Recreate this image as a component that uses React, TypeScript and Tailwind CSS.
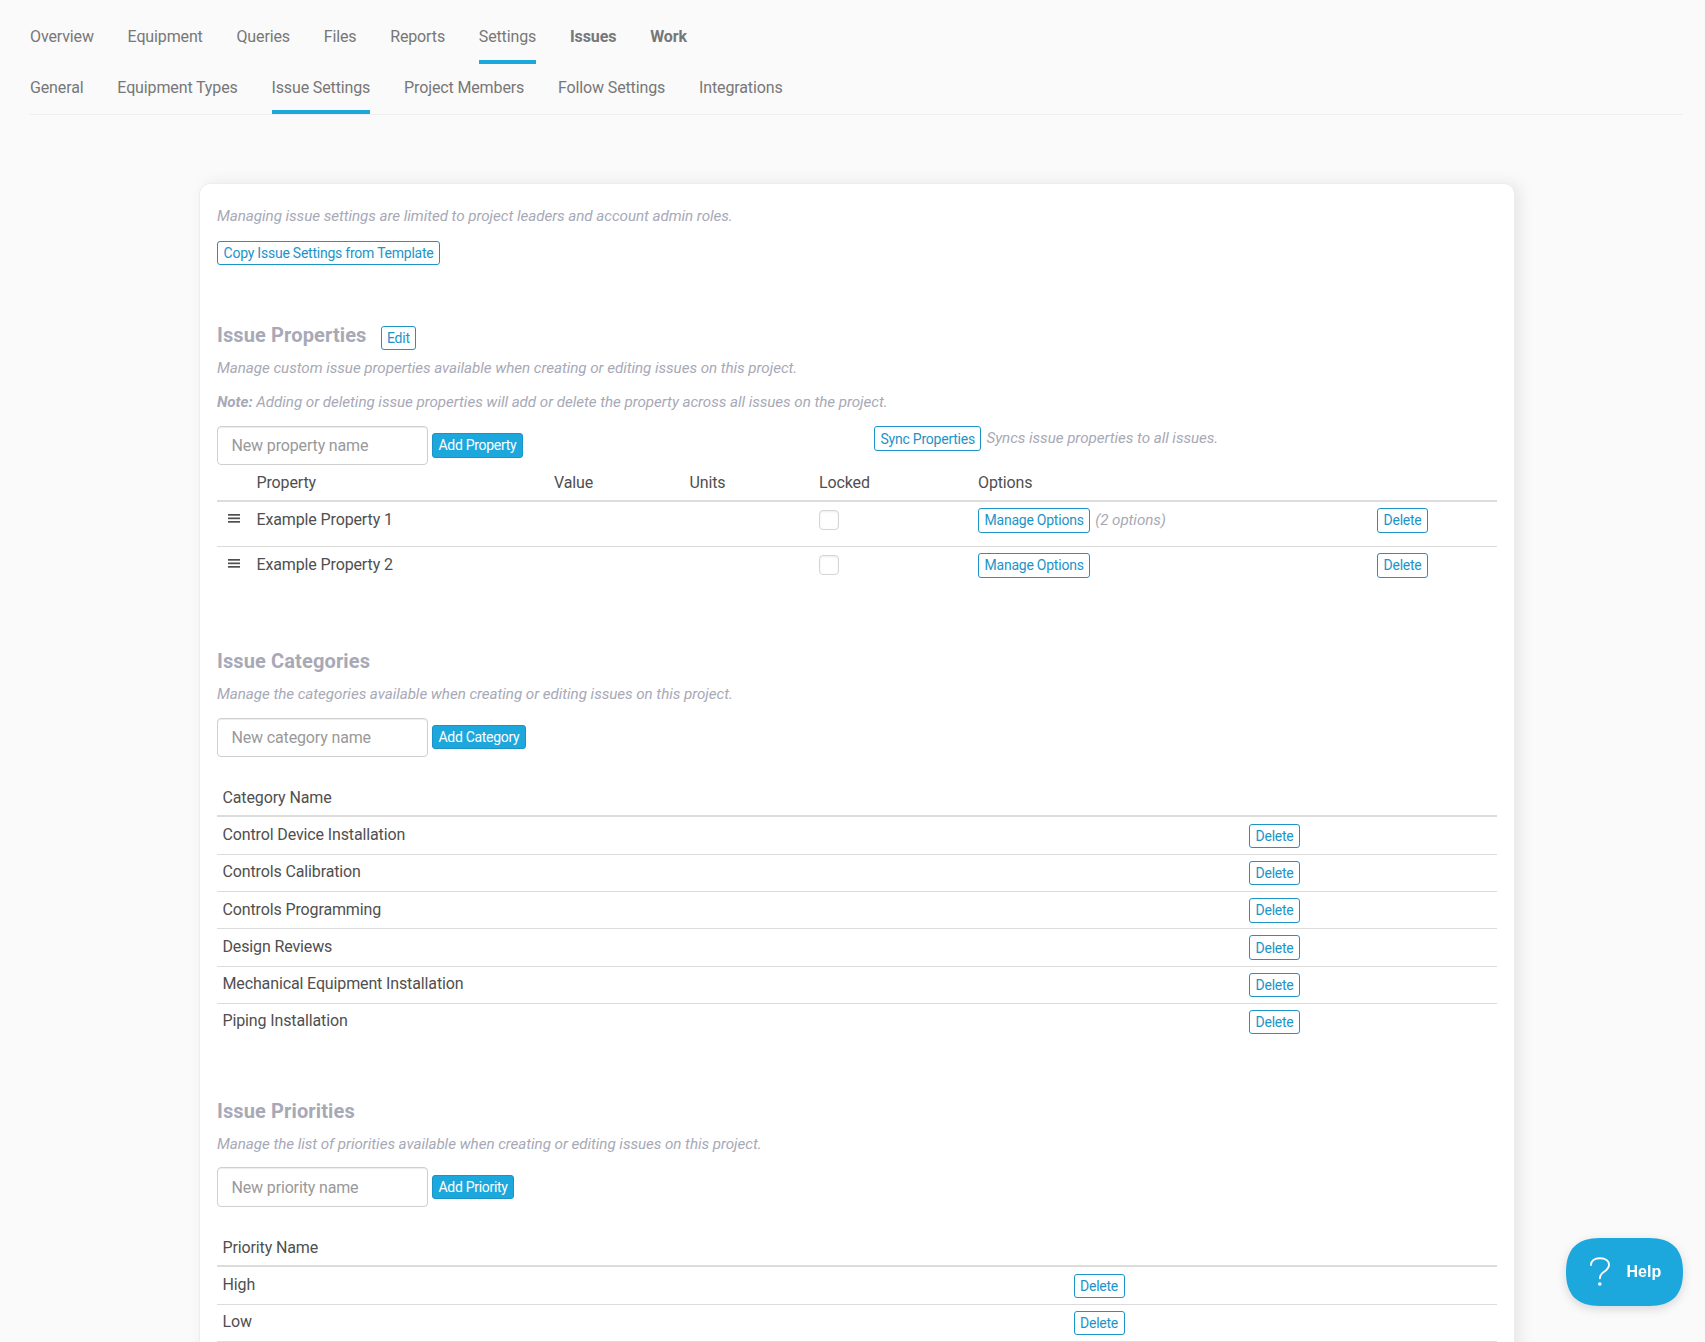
import type { ReactNode } from "react";

const mainTabs = [
  { label: "Overview" },
  { label: "Equipment" },
  { label: "Queries" },
  { label: "Files" },
  { label: "Reports" },
  { label: "Settings", active: true },
  { label: "Issues", bold: true },
  { label: "Work", bold: true },
];

const subTabs = [
  { label: "General" },
  { label: "Equipment Types" },
  { label: "Issue Settings", active: true },
  { label: "Project Members" },
  { label: "Follow Settings" },
  { label: "Integrations" },
];

const properties = [
  { name: "Example Property 1", options: "(2 options)" },
  { name: "Example Property 2", options: "" },
];

const categories = [
  "Control Device Installation",
  "Controls Calibration",
  "Controls Programming",
  "Design Reviews",
  "Mechanical Equipment Installation",
  "Piping Installation",
];

const priorities = ["High", "Low"];

const propertyCols = "grid grid-cols-[39.5px_297.5px_135.5px_129.5px_159px_399px_1fr]";

function OutlineButton({ children }: { children: ReactNode }) {
  return (
    <button className="h-[24.4px] shrink-0 rounded-[3px] border border-[#1c94c8] bg-white px-[5.5px] text-sm leading-[22px] tracking-[-0.23px] whitespace-nowrap text-[#1c94c8]">
      {children}
    </button>
  );
}

function Hint({ children }: { children: ReactNode }) {
  return <p className="text-[15.2px] leading-6 tracking-[-0.055px] text-[#a7a9b7] italic">{children}</p>;
}

function Heading({ children }: { children: ReactNode }) {
  return <h2 className="text-xl leading-7 font-bold tracking-[0.12px] text-[#a7a9b7]">{children}</h2>;
}

function AddForm({ placeholder, action }: { placeholder: string; action: string }) {
  return (
    <div className="flex h-[39.4px] items-center gap-1">
      <input
        placeholder={placeholder}
        className="h-[39.4px] w-[211px] rounded border border-[#cfcfcf] bg-white px-[13.5px] text-base tracking-[-0.15px] shadow-[inset_0_1px_1px_rgba(0,0,0,0.075)] placeholder:text-[#999]"
      />
      <button className="mb-[0.4px] h-[24.4px] rounded-[3px] border border-[#1a94c7] bg-[#1ca8dd] px-[5.5px] text-sm leading-[22px] tracking-[-0.3px] whitespace-nowrap text-white">
        {action}
      </button>
    </div>
  );
}

function NameTable({ title, rows, cols }: { title: string; rows: string[]; cols: string }) {
  return (
    <div className="mt-[21.75px]">
      <div className="h-[38px] border-b-2 border-[#dcdcdc] px-[5.5px] pt-[7px]">{title}</div>
      {rows.map((row, i) => (
        <div key={row} className={`grid h-[37.25px] ${cols} ${i > 0 ? "border-t border-[#dcdcdc]" : "pt-px"}`}>
          <span className="px-[5.5px] pt-[5.4px]">{row}</span>
          <div className="pt-1.5">
            <OutlineButton>Delete</OutlineButton>
          </div>
        </div>
      ))}
    </div>
  );
}

function Grip() {
  return (
    <svg width="12" height="9" viewBox="0 0 12 9" className="mt-[12.5px] ml-[11px]" fill="#4f4f4f">
      <rect width="12" height="1.7" y="0" />
      <rect width="12" height="1.7" y="3.5" />
      <rect width="12" height="1.7" y="7" />
    </svg>
  );
}

function HelpButton() {
  return (
    <button className="fixed right-[22px] bottom-9 flex h-[68px] w-[117px] items-center pl-6 font-['Liberation_Sans',Arial,sans-serif] text-white">
      <svg
        width="117"
        height="68"
        viewBox="0 0 117 68"
        className="absolute inset-0 overflow-visible drop-shadow-[0_3px_5px_rgba(0,0,0,0.14)]"
      >
        <path d="M0 34C0 11 11 0 34 0H83C106 0 117 11 117 34S106 68 83 68H34C11 68 0 57 0 34Z" fill="#1ca8dd" />
      </svg>
      <svg
        width="20"
        height="30"
        viewBox="0 0 20 30"
        className="relative"
        fill="none"
        stroke="white"
        strokeWidth="1.9"
        strokeLinecap="round"
      >
        <path d="M1 8C1 3.500 4.500 1.300 10 1.300S19 4 19 7.800C19 11.500 16.500 13 14 14.800C11.500 16.600 9.900 18 9.900 21.300" />
        <circle cx="9.800" cy="27" r="1.800" fill="white" stroke="none" />
      </svg>
      <span className="relative -mt-px ml-[16.5px] text-base leading-5 font-bold tracking-normal">Help</span>
    </button>
  );
}

export default function App() {
  return (
    <div className="h-[1342px] overflow-hidden bg-[#fafafa] pr-[22px] pl-[30px] font-['Roboto',sans-serif] text-base leading-6 tracking-[-0.13px] text-[#4f4f4f]">
      <nav className="flex h-16 gap-[33.75px] pt-[25px] text-[#777]">
        {mainTabs.map((tab) => (
          <a
            key={tab.label}
            className={`border-b-4 ${tab.active ? "border-[#1ca8dd]" : "border-transparent"} ${tab.bold ? "font-bold tracking-[-0.08px]" : ""}`}
          >
            {tab.label}
          </a>
        ))}
      </nav>
      <nav className="flex h-[51px] gap-[33.85px] border-b border-[#eee] pt-3 text-[#777]">
        {subTabs.map((tab) => (
          <a key={tab.label} className={`border-b-4 ${tab.active ? "border-[#1ca8dd]" : "border-transparent"}`}>
            {tab.label}
          </a>
        ))}
      </nav>

      <main className="mt-[68px] ml-[169px] h-[1300px] w-[1316px] rounded-[11px] border border-[#ededed] bg-white px-[17px] pt-5 shadow-[5px_0_15px_rgba(0,0,0,0.08)]">
        <Hint>Managing issue settings are limited to project leaders and account admin roles.</Hint>
        <div className="mt-[13px] flex h-6">
          <OutlineButton>Copy Issue Settings from Template</OutlineButton>
        </div>

        <section className="mt-14">
          <div className="flex h-7 gap-3.5">
            <Heading>Issue Properties</Heading>
            <div className="pt-[5px]">
              <OutlineButton>Edit</OutlineButton>
            </div>
          </div>
          <div className="mt-[7px]">
            <Hint>Manage custom issue properties available when creating or editing issues on this project.</Hint>
          </div>
          <div className="mt-2.5">
            <Hint>
              <b>Note:</b> Adding or deleting issue properties will add or delete the property across all issues on the
              project.
            </Hint>
          </div>
          <div className="mt-3 grid grid-cols-[657px_1fr]">
            <AddForm placeholder="New property name" action="Add Property" />
            <div className="flex gap-[5px]">
              <div className="pt-[0.45px]">
                <OutlineButton>Sync Properties</OutlineButton>
              </div>
              <Hint>Syncs issue properties to all issues.</Hint>
            </div>
          </div>

          <div className={`${propertyCols} h-[36.6px] border-b-2 border-[#dcdcdc] pt-1.5`}>
            <span />
            <span>Property</span>
            <span>Value</span>
            <span>Units</span>
            <span>Locked</span>
            <span>Options</span>
          </div>
          {properties.map((p, i) => (
            <div key={p.name} className={`${propertyCols} ${i > 0 ? "h-[45px] border-t border-[#dcdcdc]" : "h-11"}`}>
              <Grip />
              <span className="pt-1.5">{p.name}</span>
              <span />
              <span />
              <input
                type="checkbox"
                className="mt-2 size-5 appearance-none rounded border border-[#d5d5d5] bg-white shadow-[inset_0_1px_2px_rgba(0,0,0,0.08)]"
              />
              <div className="flex gap-[5px] pt-[6.2px]">
                <OutlineButton>Manage Options</OutlineButton>
                {p.options && <Hint>{p.options}</Hint>}
              </div>
              <div className="pt-[6.2px]">
                <OutlineButton>Delete</OutlineButton>
              </div>
            </div>
          ))}
        </section>

        <section className="mt-[56.15px]">
          <Heading>Issue Categories</Heading>
          <div className="mt-[7px] mb-[11.4px]">
            <Hint>Manage the categories available when creating or editing issues on this project.</Hint>
          </div>
          <AddForm placeholder="New category name" action="Add Category" />
          <NameTable title="Category Name" rows={categories} cols="grid-cols-[1032px_1fr]" />
        </section>

        <section className="mt-[56.85px]">
          <Heading>Issue Priorities</Heading>
          <div className="mt-[7px] mb-[11.4px]">
            <Hint>Manage the list of priorities available when creating or editing issues on this project.</Hint>
          </div>
          <AddForm placeholder="New priority name" action="Add Priority" />
          <NameTable title="Priority Name" rows={priorities} cols="grid-cols-[856.5px_1fr]" />
          <hr className="border-[#dcdcdc]" />
        </section>
      </main>

      <HelpButton />
    </div>
  );
}
